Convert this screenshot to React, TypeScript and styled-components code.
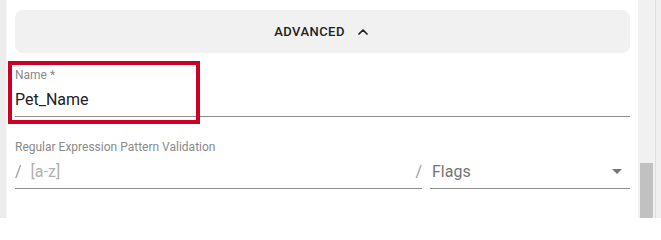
import styled, { createGlobalStyle } from "styled-components";
import { ChevronUp } from "lucide-react";

const GlobalStyle = createGlobalStyle`
  html, body {
    margin: 0;
    padding: 0;
    background: #ffffff;
    font-family: Roboto, "Liberation Sans", sans-serif;
  }
`;

export default function App() {
  return (
    <Page>
      <GlobalStyle />
      <Gutter />
      <Panel>
        <AdvancedBar>
          <AdvancedLabel>Advanced</AdvancedLabel>
          <ChevronUp size={16} strokeWidth={2.6} color="#222" />
        </AdvancedBar>

        <NameField>
          <Highlight />
          <Label>Name *</Label>
          <InputRow>
            <Value>Pet_Name</Value>
          </InputRow>
        </NameField>

        <RegexField>
          <Label>Regular Expression Pattern Validation</Label>
          <RegexRow>
            <InputRow>
              <Slash>/</Slash>
              <Placeholder>[a-z]</Placeholder>
              <Slash>/</Slash>
            </InputRow>
            <FlagsSelect>
              <SelectText>Flags</SelectText>
              <DropArrow viewBox="0 0 24 24" width={24} height={24}>
                <path d="M7 10l5 5 5-5z" fill="#757575" />
              </DropArrow>
            </FlagsSelect>
          </RegexRow>
        </RegexField>
      </Panel>
      <ScrollTrack>
        <ScrollThumb />
      </ScrollTrack>
      <OuterEdge />
    </Page>
  );
}

const Page = styled.div`
  display: flex;
  width: 661px;
  height: 218px;
  overflow: hidden;
`;

const Gutter = styled.div`
  width: 6px;
  background: #ececec;
  border-right: 1px solid #f6f6f6;
`;

const Panel = styled.div`
  flex: 1;
  display: flex;
  flex-direction: column;
  padding: 10px 8px 0 8px;
  background: #fff;
`;

const AdvancedBar = styled.div`
  height: 43px;
  display: flex;
  align-items: center;
  justify-content: center;
  gap: 10px;
  border-radius: 8px;
  background: #f1f1f1;
`;

const AdvancedLabel = styled.span`
  font-size: 13px;
  font-weight: 500;
  letter-spacing: 0.45px;
  text-transform: uppercase;
  color: #212121;
`;

const Field = styled.div`
  display: flex;
  flex-direction: column;
`;

const NameField = styled(Field)`
  position: relative;
  margin-top: 15px;
`;

const RegexField = styled(Field)`
  margin-top: 23px;
`;

const Highlight = styled.div`
  position: absolute;
  left: -7px;
  top: -7px;
  width: 192px;
  height: 63px;
  box-sizing: border-box;
  border: 4px solid #cc0026;
  pointer-events: none;
`;

const Label = styled.div`
  font-size: 12px;
  line-height: 14px;
  color: #8a8a8a;
`;

const InputRow = styled.div`
  flex: 1;
  display: flex;
  align-items: center;
  margin-top: 8px;
  padding-bottom: 7px;
  border-bottom: 1px solid #8e8e8e;
  font-size: 16px;
  line-height: 19px;
`;

const Value = styled.span`
  color: #212121;
`;

const Slash = styled.span`
  color: #9a9a9a;
`;

const Placeholder = styled.span`
  flex: 1;
  margin-left: 9px;
  color: #b0b0b0;
`;

const RegexRow = styled.div`
  display: flex;
  gap: 8px;
`;

const FlagsSelect = styled(InputRow)`
  flex: 0 0 200px;
  padding-left: 2px;
  box-sizing: border-box;
`;

const SelectText = styled.span`
  flex: 1;
  color: #757575;
`;

const DropArrow = styled.svg`
  margin: -3px 1px -2px 0;
`;

const ScrollTrack = styled.div`
  width: 17px;
  display: flex;
  justify-content: center;
  padding-top: 163px;
  background: #f1f1f1;
`;

const ScrollThumb = styled.div`
  width: 13px;
  background: #c1c1c1;
`;

const OuterEdge = styled.div`
  width: 5px;
  border-left: 1px solid #dedede;
  background: #f0f0f0;
`;
